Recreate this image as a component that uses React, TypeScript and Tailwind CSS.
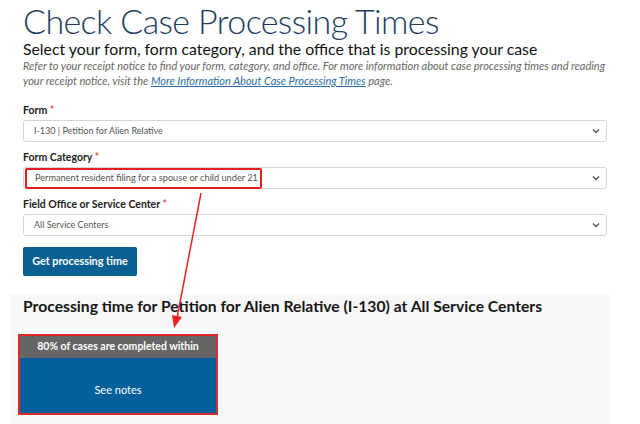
import React from "react";

function Chevron() {
  return (
    <svg width="8" height="6" viewBox="0 0 8 6" className="absolute right-[6px] top-1/2 -translate-y-1/2">
      <path d="M1 1.5 L4 4.5 L7 1.5" fill="none" stroke="#555" strokeWidth="1.4" />
    </svg>
  );
}

function Field({ label, value, highlight }: { label: string; value: string; highlight?: boolean }) {
  return (
    <div className="flex flex-col">
      <div className="text-[10.5px] font-bold text-[#222] leading-[13px] h-[13px] mb-[3px]">
        {label} <span className="text-[#d9534f]">*</span>
      </div>
      <div className="relative h-[22px] w-[584px] rounded-[3px] border border-[#d6d6d6] bg-white flex items-center">
        {highlight ? (
          <div className="ml-[1px] h-[21px] w-[237px] shrink-0 border-2 border-[#e02020] rounded-[2px] flex items-center pl-[8px] text-[9.2px] text-[#555] whitespace-nowrap">
            {value}
          </div>
        ) : (
          <div className="pl-[10px] text-[9px] text-[#555] whitespace-nowrap">{value}</div>
        )}
        <Chevron />
      </div>
    </div>
  );
}

export default function App() {
  return (
    <div className="relative w-[640px] h-[424px] overflow-hidden bg-white" style={{ fontFamily: "Lato, 'Open Sans', sans-serif" }}>
      <div className="pl-[23px] pt-[2px]">
        <h1 className="text-[34px] font-light leading-[38px] text-[#1d3c5e] tracking-[-0.6px] whitespace-nowrap">Check Case Processing Times</h1>
        <div className="text-[15.8px] leading-[18px] text-[#111] whitespace-nowrap">Select your form, form category, and the office that is processing your case</div>
        <p className="text-[11px] italic leading-[15px] text-[#666] w-[584px]">
          Refer to your receipt notice to find your form, category, and office. For more information about case processing times and reading your receipt notice, visit the{" "}
          <span className="text-[#2a6eab] underline">More Information About Case Processing Times</span> page.
        </p>
        <div className="mt-[16px] flex flex-col gap-[9px]">
          <Field label="Form" value="I-130 | Petition for Alien Relative" />
          <Field label="Form Category" value="Permanent resident filing for a spouse or child under 21" highlight />
          <Field label="Field Office or Service Center" value="All Service Centers" />
        </div>
        <button className="mt-[11px] h-[29px] w-[114px] rounded-[2px] bg-[#0a5f93] text-white text-[10.8px] font-bold">Get processing time</button>
      </div>
      <div className="ml-[10px] mt-[18px] w-[600px] h-[140px] bg-[#f8f8f8] pl-[13px] pt-[2px]">
        <div className="text-[15.7px] font-bold leading-[20px] text-[#161616] whitespace-nowrap">Processing time for Petition for Alien Relative (I-130) at All Service Centers</div>
        <div className="mt-[18px] -ml-[5px] w-[200px] h-[81px] border-2 border-[#e02a2a] flex flex-col">
          <div className="h-[22px] bg-[#666666] text-white text-[10.5px] font-bold flex items-center justify-center">80% of cases are completed within</div>
          <div className="flex-1 bg-[#03609a] text-white text-[11px] flex items-center justify-center pt-[10px]">See notes</div>
        </div>
      </div>
      <svg className="absolute left-0 top-0 pointer-events-none" width="640" height="424">
        <line x1="201" y1="193" x2="177" y2="318" stroke="#e8231f" strokeWidth="1.5" />
        <polygon points="172,315 182,317 174,328" fill="#e8231f" />
      </svg>
    </div>
  );
}
